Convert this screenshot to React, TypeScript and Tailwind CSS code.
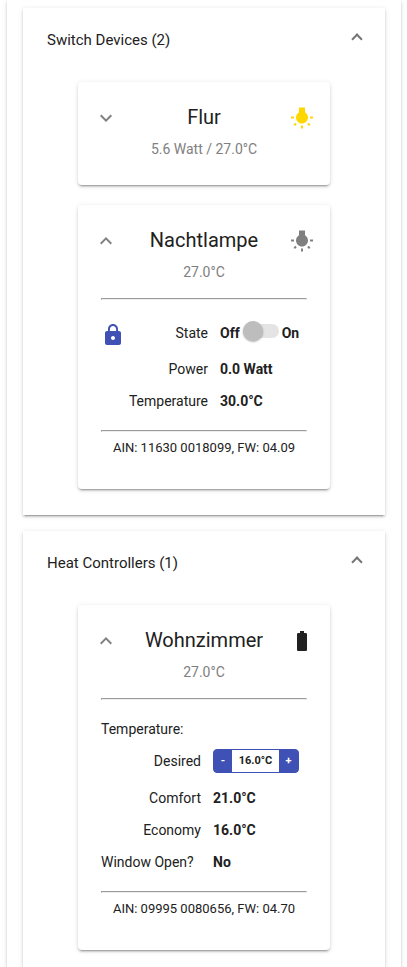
import React, { useState } from 'react';

type IconProps = { path: string; className?: string };

const ICONS = {
  expandMore: 'M16.59 8.59L12 13.17 7.41 8.59 6 10l6 6 6-6z',
  expandLess: 'M12 8l-6 6 1.41 1.41L12 10.83l4.59 4.58L18 14z',
  bulb: 'M3.55 18.54l1.41 1.41 1.8-1.79-1.41-1.41-1.8 1.79zM11 22.45h2V19.5h-2v2.95zM4 10.5H1v2h3v-2zm11-4.19V1.5H9v4.81C7.21 7.35 6 9.28 6 11.5c0 3.31 2.69 6 6 6s6-2.69 6-6c0-2.22-1.21-4.15-3-5.19zm5 4.19v2h3v-2h-3zm-2.76 7.66l1.79 1.8 1.41-1.41-1.8-1.79-1.4 1.4z',
  battery:
    'M15.67 4H14V2h-4v2H8.33C7.6 4 7 4.6 7 5.33v15.33C7 21.4 7.6 22 8.34 22h7.33c.74 0 1.34-.6 1.34-1.33V5.33C17 4.6 16.4 4 15.67 4z',
  lock: 'M18 8h-1V6c0-2.76-2.24-5-5-5S7 3.24 7 6v2H6c-1.1 0-2 .9-2 2v10c0 1.1.9 2 2 2h12c1.1 0 2-.9 2-2V10c0-1.1-.9-2-2-2zm-6 9c-1.1 0-2-.9-2-2s.9-2 2-2 2 .9 2 2-.9 2-2 2zm3.1-9H8.9V6c0-1.71 1.39-3.1 3.1-3.1 1.71 0 3.1 1.39 3.1 3.1v2z',
};

const ELEVATION =
  'shadow-[0_3px_1px_-2px_rgba(0,0,0,0.2),0_2px_2px_0_rgba(0,0,0,0.14),0_1px_5px_0_rgba(0,0,0,0.12)]';

function Icon({ path, className = '' }: IconProps) {
  return (
    <svg viewBox="0 0 24 24" aria-hidden="true" className={`size-6 shrink-0 fill-current ${className}`}>
      <path d={path} />
    </svg>
  );
}

function Divider() {
  return <hr className="h-0.5 border border-[#9a9a9a] border-r-[#eeeeee] border-b-[#eeeeee]" />;
}

function Panel({ title, children }: { title: string; children: React.ReactNode }) {
  return (
    <section className={`bg-white ${ELEVATION}`}>
      <h2>
        <button type="button" aria-expanded="true" className="flex h-16 w-full items-center justify-between px-6 text-[15px]">
          <span>{title}</span>
          <span className="mb-0.5 size-2 -rotate-[135deg] border-r-2 border-b-2 border-[#757575]" />
        </button>
      </h2>
      <div className="flex flex-col items-center gap-5 px-6 pt-2.5 pb-[26px]">{children}</div>
    </section>
  );
}

type DeviceProps = {
  name: string;
  summary: string;
  icon: string;
  iconClass?: string;
  footer?: string;
  children?: React.ReactNode;
};

function DeviceCard({ name, summary, icon, iconClass, footer, children }: DeviceProps) {
  return (
    <article className={`w-full max-w-[252px] rounded bg-white pt-[19px] ${ELEVATION}`}>
      <header className="flex items-center justify-between px-4">
        <button type="button" aria-label={`Toggle ${name}`} aria-expanded={!!children} className="text-[#808080]">
          <Icon path={children ? ICONS.expandLess : ICONS.expandMore} />
        </button>
        <h3 className="pb-0.5 text-xl leading-8">{name}</h3>
        <Icon path={icon} className={iconClass} />
      </header>
      <p className="text-center text-sm leading-7 text-[#808080]">{summary}</p>
      {children ? (
        <div className="px-[23px] pt-3 pb-[25px]">
          <Divider />
          <dl className="py-[13px] text-sm">{children}</dl>
          <Divider />
          <p className="text-center text-[13px] leading-8">{footer}</p>
        </div>
      ) : (
        <div className="h-[22px]" />
      )}
    </article>
  );
}

function Row({ label, children }: { label: React.ReactNode; children?: React.ReactNode }) {
  return (
    <div className="flex h-8 items-center gap-3">
      <dt className="w-[100px] text-right">{label}</dt>
      <dd className="font-bold">{children}</dd>
    </div>
  );
}

function SwitchRow({ label, children }: { label: string; children: React.ReactNode }) {
  return (
    <div className="flex h-8 items-center gap-3">
      <dt className="w-[107px] text-right">{label}</dt>
      <dd className="font-bold">{children}</dd>
    </div>
  );
}

export default function App() {
  const [on, setOn] = useState(false);
  const [desired, setDesired] = useState(16);

  return (
    <div className="bg-white pr-1.5 pl-[7px] font-[Roboto,sans-serif] text-[#212121]">
      <main className={`flex flex-col gap-4 px-4 pt-2 pb-6 ${ELEVATION}`}>
        <Panel title="Switch Devices (2)">
          <DeviceCard name="Flur" summary="5.6 Watt / 27.0°C" icon={ICONS.bulb} iconClass="text-[#ffd700]" />
          <DeviceCard
            name="Nachtlampe"
            summary="27.0°C"
            icon={ICONS.bulb}
            iconClass="text-[#808080]"
            footer="AIN: 11630 0018099, FW: 04.09"
          >
            <div className="flex h-10 items-center gap-3">
              <dt className="flex h-8 w-[107px] items-center justify-between">
                <Icon path={ICONS.lock} className="mt-1 text-[#3f51b5]" />
                State
              </dt>
              <dd className="font-bold">
                <label className="flex items-center gap-[3px]">
                  Off
                  <input
                    type="checkbox"
                    role="switch"
                    aria-label="State"
                    checked={on}
                    onChange={() => setOn(!on)}
                    className="relative mb-1 h-3.5 w-9 appearance-none rounded-full bg-[#e4e4e4] before:absolute before:-top-[3px] before:left-0 before:size-5 before:rounded-full before:bg-[#bdbdbd] before:shadow-[0_1px_2px_rgba(0,0,0,0.3)] before:content-[''] checked:before:left-4"
                  />
                  On
                </label>
              </dd>
            </div>
            <SwitchRow label="Power">0.0 Watt</SwitchRow>
            <SwitchRow label="Temperature">30.0°C</SwitchRow>
          </DeviceCard>
        </Panel>

        <Panel title="Heat Controllers (1)">
          <DeviceCard
            name="Wohnzimmer"
            summary="27.0°C"
            icon={ICONS.battery}
            footer="AIN: 09995 0080656, FW: 04.70"
          >
            <div className="flex h-8 items-center">
              <dt>Temperature:</dt>
            </div>
            <div className="pb-[5px]">
              <Row label="Desired">
                <div className="flex h-6 items-stretch overflow-hidden rounded border border-[#3f51b5] bg-[#3f51b5] text-[11px]">
                  <button type="button" aria-label="Decrease" onClick={() => setDesired(desired - 0.5)} className="w-[18px] text-white">
                    -
                  </button>
                  <output className="flex w-[47px] items-center justify-center bg-white">{desired.toFixed(1)}°C</output>
                  <button type="button" aria-label="Increase" onClick={() => setDesired(desired + 0.5)} className="w-[19px] text-white">
                    +
                  </button>
                </div>
              </Row>
            </div>
            <Row label="Comfort">21.0°C</Row>
            <Row label="Economy">16.0°C</Row>
            <Row label={<span className="block text-left">Window Open?</span>}>No</Row>
          </DeviceCard>
        </Panel>
      </main>
    </div>
  );
}
